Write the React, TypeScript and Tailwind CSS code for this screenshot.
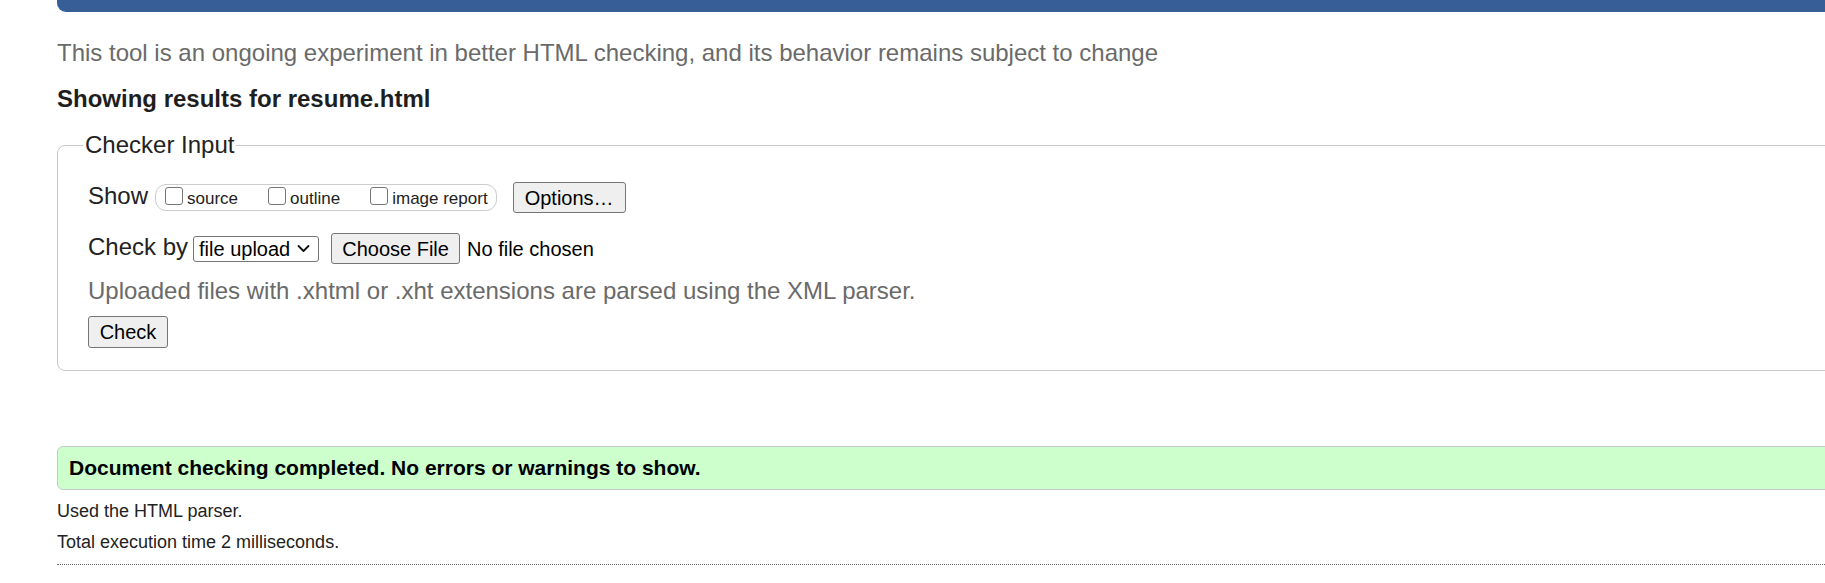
import React from "react";

const font = { fontFamily: '"Liberation Sans", Arial, sans-serif' };

function Box({ label }: { label: string }) {
  return (
    <label className="flex items-start gap-[4px]">
      <input
        type="checkbox"
        className="appearance-none mt-[1px] w-[18px] h-[18px] border border-[#767676] rounded-[3px] bg-white shrink-0"
      />
      <span className="mt-[3px] text-[17px] leading-[20px] text-[#222] whitespace-nowrap">{label}</span>
    </label>
  );
}

export default function App() {
  return (
    <div className="w-full h-[583px] overflow-hidden bg-white" style={font}>
      <div className="pl-[57px]">
        <div className="w-[1800px]">
          <div className="h-[12px] bg-[#375e97] rounded-bl-[9px]" />
          <p className="mt-[27px] text-[24px] leading-[28px] text-[#6a6a6a] whitespace-nowrap">
            This tool is an ongoing experiment in better HTML checking, and its behavior remains subject to change
          </p>
          <h2 className="mt-[18px] text-[24px] leading-[28px] font-bold text-[#1e1e1e] whitespace-nowrap">
            Showing results for resume.html
          </h2>
          <fieldset className="mt-[20px] border border-[#c8c8c8] rounded-[8px] px-[30px] pt-[25px] pb-[22px]">
            <legend className="-ml-[5px] px-[2px] text-[24px] leading-[24px] text-[#222]">Checker Input</legend>
            <div className="flex items-start h-[31px]">
              <span className="mt-[2px] text-[24px] leading-[24px] text-[#222]">Show</span>
              <div className="ml-[7px] mt-[2px] h-[27px] border border-[#cccccc] rounded-[11px] flex items-start pl-[9px] pr-[8px] pt-[1px] gap-[30px]">
                <Box label="source" />
                <Box label="outline" />
                <Box label="image report" />
              </div>
              <button className="ml-[16px] w-[113px] h-[31px] bg-[#efefef] border border-[#767676] rounded-[3px] text-[20px] leading-[20px] text-black">
                Options…
              </button>
            </div>
            <div className="mt-[20px] flex items-center h-[31px]">
              <span className="self-start mt-[2px] text-[24px] leading-[24px] text-[#222]">Check by</span>
              <div className="ml-[5px] w-[126px] h-[26px] border border-[#767676] rounded-[3px] bg-white flex items-center pl-[5px] pr-[8px] text-[20px] leading-[20px] text-black">
                <span className="flex-1 whitespace-nowrap">file upload</span>
                <svg width="13" height="9" viewBox="0 0 13 9" className="shrink-0">
                  <path d="M1.5 2 L6.5 7 L11.5 2" fill="none" stroke="#111" strokeWidth="1.8" strokeLinecap="round" strokeLinejoin="round" />
                </svg>
              </div>
              <button className="ml-[12px] w-[129px] h-[31px] bg-[#efefef] border border-[#767676] rounded-[3px] text-[20px] leading-[20px] text-black whitespace-nowrap">
                Choose File
              </button>
              <span className="ml-[7px] text-[20px] leading-[20px] text-black whitespace-nowrap">No file chosen</span>
            </div>
            <p className="mt-[13px] text-[24px] leading-[28px] text-[#6a6a6a] whitespace-nowrap">
              Uploaded files with .xhtml or .xht extensions are parsed using the XML parser.
            </p>
            <button className="mt-[11px] w-[80px] h-[32px] bg-[#efefef] border border-[#767676] rounded-[3px] text-[20px] leading-[20px] text-black">
              Check
            </button>
          </fieldset>
          <div className="mt-[75px] h-[44px] border border-[#c8c8c8] rounded-[6px] bg-[#ccffcc] flex items-center pl-[11px]">
            <span className="text-[21px] leading-[24px] font-bold text-black whitespace-nowrap">
              Document checking completed. No errors or warnings to show.
            </span>
          </div>
          <p className="mt-[9px] text-[18px] leading-[24px] text-[#222]">Used the HTML parser.</p>
          <p className="mt-[7px] text-[18px] leading-[24px] text-[#222]">Total execution time 2 milliseconds.</p>
          <div className="mt-[10px] border-t border-dotted border-[#666]" />
        </div>
      </div>
    </div>
  );
}
